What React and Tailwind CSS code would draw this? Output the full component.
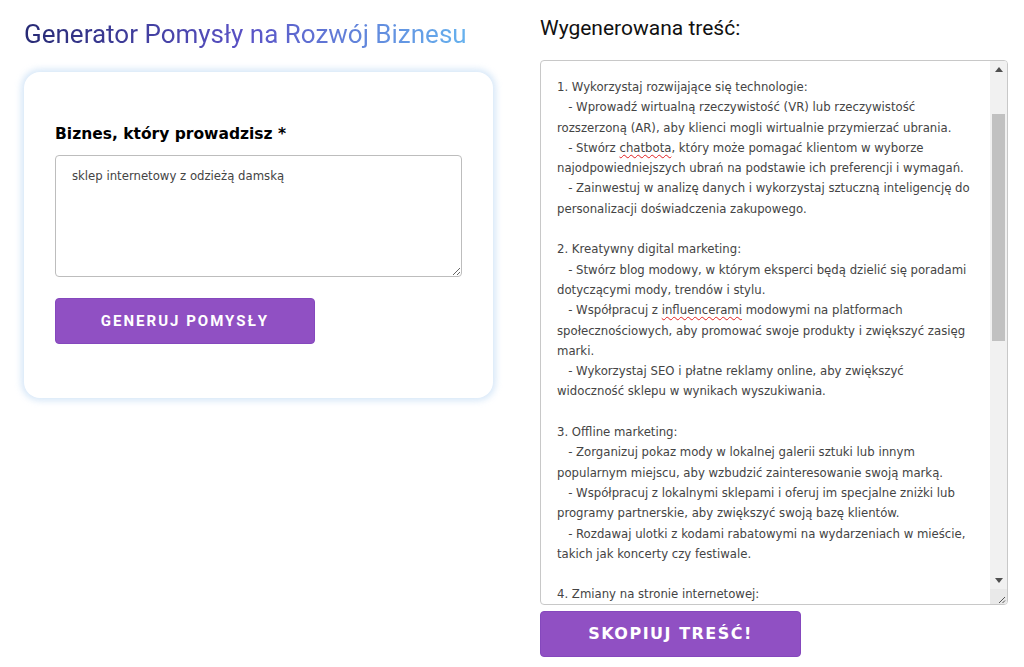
import React from 'react';

const verdana = { fontFamily: '"DejaVu Sans", Verdana, sans-serif' };
const verdanaNarrow = { fontFamily: '"DejaVu Sans Condensed", "DejaVu Sans", Verdana, sans-serif' };
const roboto = { fontFamily: 'Roboto, "Liberation Sans", sans-serif' };

// Wavy red underline like the browser spell checker
const Typo = ({ children }) => (
  <span className="underline decoration-wavy decoration-[#e02020] decoration-1 underline-offset-2">{children}</span>
);

const Arrow = ({ down }) => (
  <svg width="8" height="5" viewBox="0 0 8 5">
    <path d={down ? 'M0 0 L8 0 L4 5 Z' : 'M0 5 L8 5 L4 0 Z'} fill="#505050" />
  </svg>
);

const Grip = () => (
  <svg width="9" height="9" viewBox="0 0 9 9">
    <path d="M8 2 L2 8 M8 5.5 L5.5 8" stroke="#555" strokeWidth="1" />
  </svg>
);

function FakeScrollbar() {
  return (
    <div className="flex w-[17px] shrink-0 flex-col bg-[#f1f1f1]">
      <div className="flex h-[17px] items-center justify-center">
        <Arrow />
      </div>
      <div className="flex-1 px-[2px]">
        <div className="mt-[36px] h-[227px] bg-[#c1c1c1]" />
      </div>
      <div className="flex h-[17px] items-center justify-center">
        <Arrow down />
      </div>
      <div className="flex h-[15px] items-end justify-end bg-[#e9e9e9] pr-[1px]">
        <Grip />
      </div>
    </div>
  );
}

function GeneratedText() {
  return (
    <div className="flex h-[545px] w-full overflow-hidden rounded-[4px] border border-[#c8c8c8] bg-white">
      <div
        className="flex-1 overflow-hidden whitespace-pre-wrap px-4 pt-[16px] text-[13px] leading-[20.3px] text-[#444]"
        style={verdanaNarrow}
      >
        {'1. Wykorzystaj rozwijające się technologie:\n'}
        {'   - Wprowadź wirtualną rzeczywistość (VR) lub rzeczywistość rozszerzoną (AR), aby klienci mogli wirtualnie przymierzać ubrania.\n'}
        {'   - Stwórz '}<Typo>chatbota</Typo>{', który może pomagać klientom w wyborze najodpowiedniejszych ubrań na podstawie ich preferencji i wymagań.\n'}
        {'   - Zainwestuj w analizę danych i wykorzystaj sztuczną inteligencję do personalizacji doświadczenia zakupowego.\n\n'}
        {'2. Kreatywny digital marketing:\n'}
        {'   - Stwórz blog modowy, w którym eksperci będą dzielić się poradami dotyczącymi mody, trendów i stylu.\n'}
        {'   - Współpracuj z '}<Typo>influencerami</Typo>{' modowymi na platformach społecznościowych, aby promować swoje produkty i zwiększyć zasięg marki.\n'}
        {'   - Wykorzystaj SEO i płatne reklamy online, aby zwiększyć widoczność sklepu w wynikach wyszukiwania.\n\n'}
        {'3. Offline marketing:\n'}
        {'   - Zorganizuj pokaz mody w lokalnej galerii sztuki lub innym popularnym miejscu, aby wzbudzić zainteresowanie swoją marką.\n'}
        {'   - Współpracuj z lokalnymi sklepami i oferuj im specjalne zniżki lub programy partnerskie, aby zwiększyć swoją bazę klientów.\n'}
        {'   - Rozdawaj ulotki z kodami rabatowymi na wydarzeniach w mieście, takich jak koncerty czy festiwale.\n\n'}
        {'4. Zmiany na stronie internetowej:\n'}
        {'   - Zoptymalizuj stronę pod kątem urządzeń mobilnych, aby zakupy były wygodne na każdym ekranie.'}
      </div>
      <FakeScrollbar />
    </div>
  );
}

export default function App() {
  return (
    <div className="flex min-h-screen items-start justify-between bg-white pl-6 pr-4">
      {/* Left column: form */}
      <div className="w-[469px]">
        <h1
          className="mt-[15px] inline-block bg-gradient-to-r from-[#272a74] via-[#5a52c6] to-[#66b2ee] bg-clip-text text-[26px] leading-[38px] text-transparent"
          style={roboto}
        >
          Generator Pomysły na Rozwój Biznesu
        </h1>

        <div className="mt-[19px] rounded-[16px] bg-white px-[31px] pt-[50px] pb-[54px] shadow-[0_0_6px_3px_rgba(200,222,245,0.7)]">
          <label className="block text-[15.5px] font-bold leading-[24px] text-black" style={verdana}>
            Biznes, który prowadzisz *
          </label>
          <textarea
            defaultValue="sklep internetowy z odzieżą damską"
            spellCheck={false}
            className="mt-[9px] block h-[122px] w-full rounded-[4px] border border-[#bdbdbd] px-4 py-[10px] text-[13px] leading-[20px] text-[#444] outline-none"
            style={verdanaNarrow}
          />
          <button
            className="mt-[21px] h-[46px] w-[260px] rounded-[4px] border border-[#8548bd] bg-[#9050c3] text-[15px] font-bold tracking-[2px] text-white"
            style={roboto}
          >
            GENERUJ POMYSŁY
          </button>
        </div>
      </div>

      {/* Right column: output */}
      <div className="w-[468px]">
        <h2 className="mt-[13px] text-[21px] leading-[30px] text-[#111]" style={roboto}>
          Wygenerowana treść:
        </h2>
        <div className="mt-[17px]">
          <GeneratedText />
        </div>
        <button
          className="mt-[6px] h-[46px] w-[261px] rounded-[4px] border border-[#8548bd] bg-[#9050c3] text-[16px] font-bold tracking-[1.5px] text-white"
          style={verdana}
        >
          SKOPIUJ TREŚĆ!
        </button>
      </div>
    </div>
  );
}
